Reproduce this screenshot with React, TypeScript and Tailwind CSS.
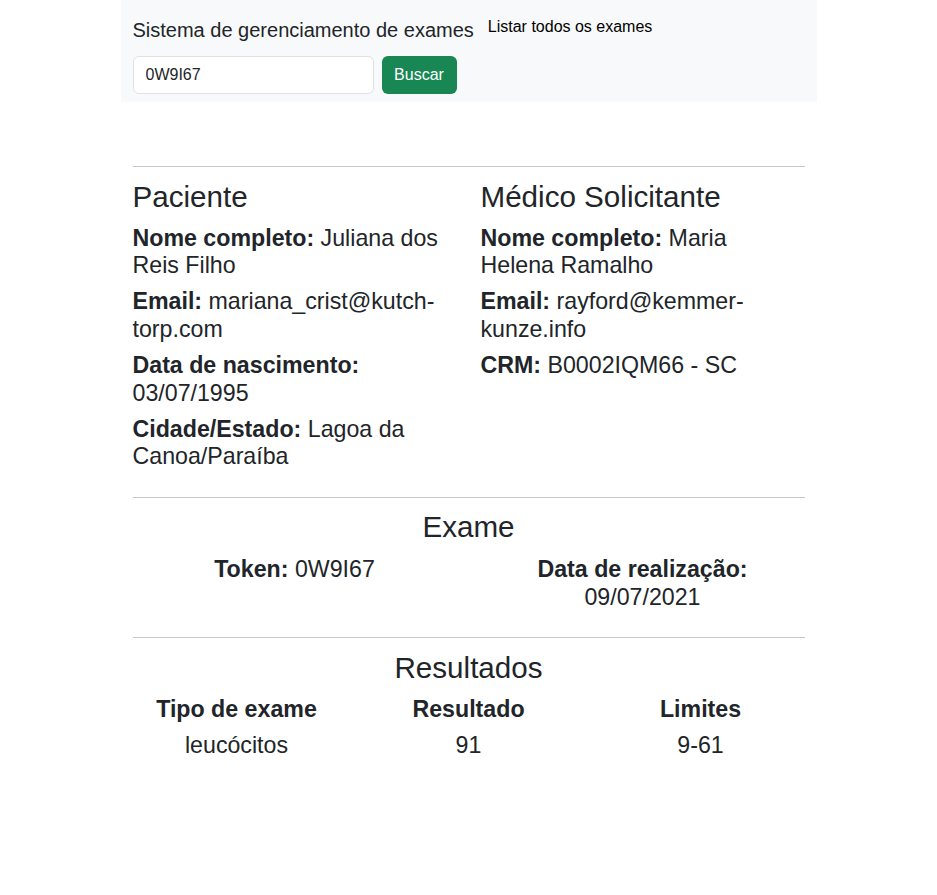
import React from "react";

const font = { fontFamily: '"Liberation Sans", Arial, sans-serif' };

function Field({ label, value }: { label: string; value: string }) {
  return (
    <h4 className="mb-2 text-[23.2px] leading-[1.2] font-normal">
      <strong className="font-bold">{label}</strong> {value}
    </h4>
  );
}

export default function App() {
  return (
    <div className="min-h-[895px] bg-white text-[#212529]" style={font}>
      <div className="mx-auto w-[720px] px-3">
        <nav className="h-[102px] bg-[#f8f9fa] px-3 pt-[15px]">
          <div className="flex items-start">
            <span className="text-[20px] leading-[30px]">Sistema de gerenciamento de exames</span>
            <a className="ml-[14px] text-[16px] leading-[24px] -mt-[0.5px] text-black">Listar todos os exames</a>
          </div>
          <form className="mt-[11px] flex" onSubmit={(e) => e.preventDefault()}>
            <input
              className="h-[38px] w-[241px] rounded-[6px] border border-[#dee2e6] bg-white px-3 text-[16px] text-[#212529] outline-none"
              defaultValue="0W9I67"
            />
            <button
              type="submit"
              className="ml-2 h-[38px] w-[75px] rounded-[6px] bg-[#198754] text-[16px] text-white"
            >
              Buscar
            </button>
          </form>
        </nav>

        <div className="px-3">
          <div className="mt-[64px] h-px bg-[#c8c8ca]" />
          <div className="mt-[12px] -mx-3 flex">
            <div className="w-1/2 px-3">
              <h2 className="mb-[10px] text-[29.6px] leading-[1.2]">Paciente</h2>
              <Field label="Nome completo:" value="Juliana dos Reis Filho" />
              <Field label="Email:" value="mariana_crist@kutch-torp.com" />
              <Field label="Data de nascimento:" value="03/07/1995" />
              <Field label="Cidade/Estado:" value="Lagoa da Canoa/Paraíba" />
            </div>
            <div className="w-1/2 px-3">
              <h2 className="mb-[10px] text-[29.6px] leading-[1.2]">Médico Solicitante</h2>
              <Field label="Nome completo:" value="Maria Helena Ramalho" />
              <Field label="Email:" value="rayford@kemmer-kunze.info" />
              <Field label="CRM:" value="B0002IQM66 - SC" />
            </div>
          </div>

          <div className="mt-[18px] h-px bg-[#c8c8ca]" />
          <div className="mt-[11px]">
            <h2 className="mb-2 text-center text-[29.6px] leading-[1.2]">Exame</h2>
            <div className="-mx-3 flex pt-[3px] text-center">
              <div className="w-1/2 px-3">
                <Field label="Token:" value="0W9I67" />
              </div>
              <div className="w-1/2 px-3">
                <Field label="Data de realização:" value="09/07/2021" />
              </div>
            </div>
          </div>

          <div className="mt-[18px] h-px bg-[#c8c8ca]" />
          <div className="mt-[12px]">
            <h2 className="mb-[10px] text-center text-[29.6px] leading-[1.2]">Resultados</h2>
            <div className="-mx-3 grid grid-cols-3 text-center">
              <div className="px-3">
                <h4 className="mb-2 text-[23.2px] leading-[1.2] font-bold">Tipo de exame</h4>
              </div>
              <div className="px-3">
                <h4 className="mb-2 text-[23.2px] leading-[1.2] font-bold">Resultado</h4>
              </div>
              <div className="px-3">
                <h4 className="mb-2 text-[23.2px] leading-[1.2] font-bold">Limites</h4>
              </div>
              <div className="px-3">
                <h4 className="mb-2 text-[23.2px] leading-[1.2]">leucócitos</h4>
              </div>
              <div className="px-3">
                <h4 className="mb-2 text-[23.2px] leading-[1.2]">91</h4>
              </div>
              <div className="px-3">
                <h4 className="mb-2 text-[23.2px] leading-[1.2]">9-61</h4>
              </div>
            </div>
          </div>
        </div>
      </div>
    </div>
  );
}
